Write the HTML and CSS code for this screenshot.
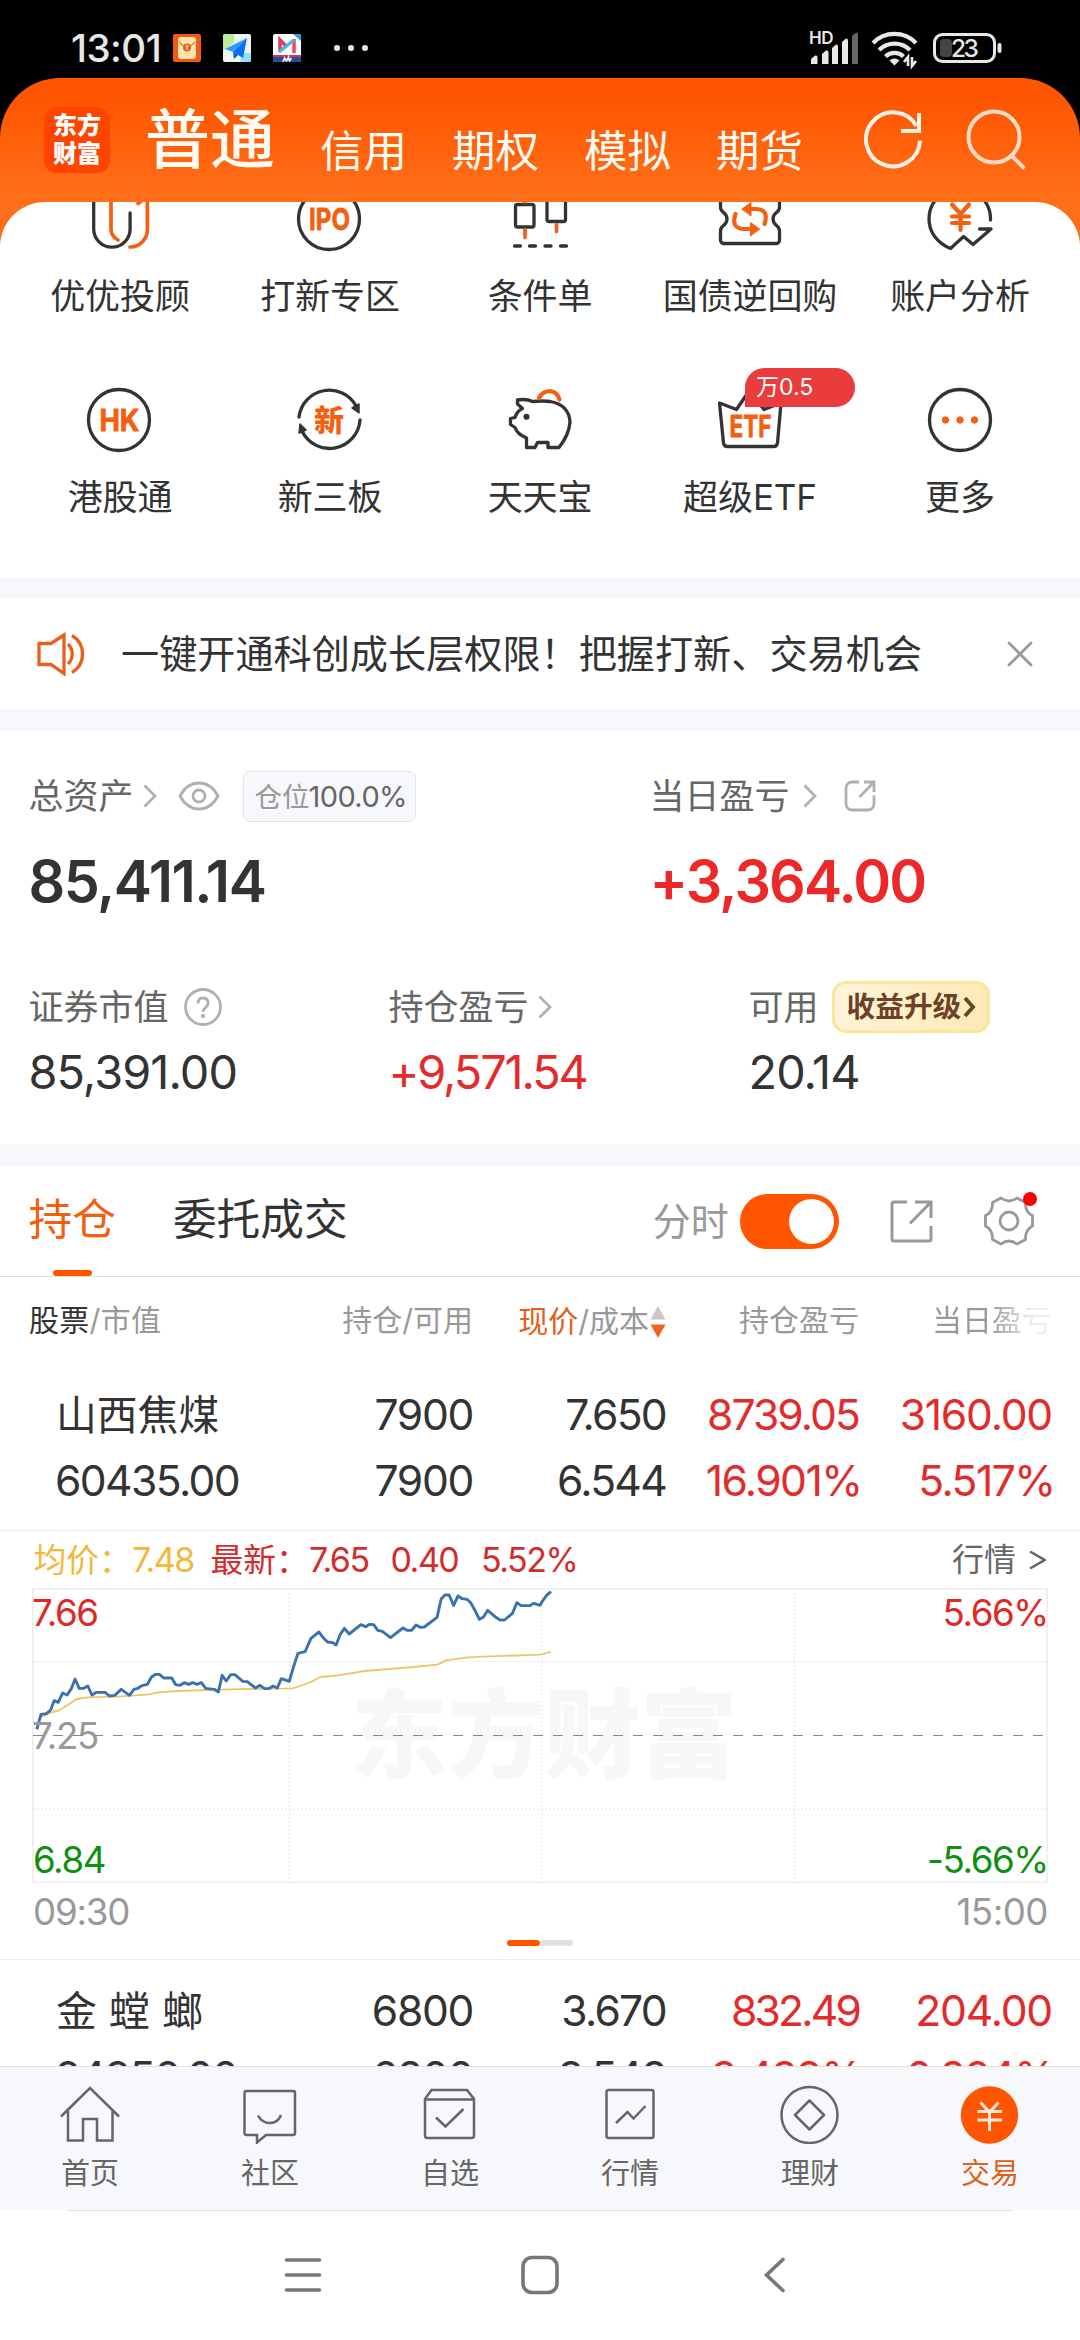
FILE: index.html
```html
<!DOCTYPE html>
<html lang="zh-CN">
<head>
<meta charset="utf-8">
<title>东方财富</title>
<link rel="stylesheet" href="styles.css">
</head>
<body>
<div class="screen">

<div class="status">
  <span class="clock">13:01</span>
  <svg class="app-ico" viewBox="0 0 28 28"><rect width="28" height="28" rx="2" fill="#f25a12"/><rect x="5" y="3" width="18" height="22" rx="3" fill="#ffe3ae"/><path d="M6 8l5 4.500h6l5-4.500" fill="none" stroke="#e8792e" stroke-width="1.200"/><circle cx="14" cy="13.500" r="4" fill="#e0601c"/><path d="M12.300 12h3.400M14 12v4" stroke="#ffe3ae" stroke-width="1.200"/></svg>
  <svg class="app-ico" viewBox="0 0 28 28"><rect width="28" height="28" rx="2" fill="#eef6f4"/><path d="M0 2a2 2 0 0 1 2-2h9v9L0 17z" fill="#bdeb9b"/><path d="M20 19h8v7a2 2 0 0 1-2 2h-9z" fill="#8be0fb"/><path d="M24 4L2 15l8 3z" fill="#2b9bff"/><path d="M24 4L10 18l10 6z" fill="#0a6cf0"/><path d="M10 18l1 7 4-4z" fill="#0857c8"/></svg>
  <svg class="app-ico" viewBox="0 0 28 28"><rect width="28" height="28" rx="2" fill="#fff"/><path d="M20 0h6a2 2 0 0 1 2 2v5z" fill="#2b9fd8"/><path d="M7 18V6l6 6" fill="none" stroke="#e23a5a" stroke-width="3.500"/><path d="M21 5v14" stroke="#e8455f" stroke-width="3.500"/><path d="M6 18L21 6" stroke="#4cb6dd" stroke-width="3.500"/><path d="M0 22h28" stroke="#d8344b" stroke-width="2"/><path d="M0 23h28v3a2 2 0 0 1-2 2H2a2 2 0 0 1-2-2z" fill="#2c4aa0"/><path d="M10 28l1.500-4 2 3 2-4 1 4 2-3" fill="none" stroke="#fff" stroke-width="1.500"/></svg>
  <svg class="more-ico" viewBox="0 0 36 8" fill="#e8e8e8"><circle cx="4" cy="4" r="3"/><circle cx="18" cy="4" r="3"/><circle cx="32" cy="4" r="3"/></svg>
  <div class="status-right">
    <svg width="192" height="36" viewBox="0 0 192 36">
      <text x="0" y="14" class="hd">HD</text>
      <g fill="#e8e8e8"><path d="M2 34v-5l4-3.500a2 2 0 0 1 2.500 2V34z"/><path d="M13 34V24l4-3.500a2 2 0 0 1 2.500 2V34z"/><path d="M23 34V18l4-3.500a2 2 0 0 1 2 2V34z"/><path d="M33 34V12l4-3.500a2 2 0 0 1 2 2V34z"/></g>
      <path d="M43 34V6l4-3.500a2 2 0 0 1 2 2V34z" fill="#666"/>
      <g fill="none" stroke="#e8e8e8" stroke-width="4.200"><path d="M64 13a30 30 0 0 1 43 0"/><path d="M70 20a22 22 0 0 1 31 0"/><path d="M76.500 26.500a13 13 0 0 1 18 0"/></g>
      <path d="M80.500 30.500a7 7 0 0 1 10 0l-5 5z" fill="#e8e8e8"/>
      <path d="M99 36v-9l-4 5M103 27v9l4-5" fill="none" stroke="#e8e8e8" stroke-width="2.600"/>
      <rect x="125.500" y="4.500" width="60" height="27" rx="8" fill="none" stroke="#e8e8e8" stroke-width="3"/>
      <rect x="131" y="9" width="12" height="18" rx="4" fill="#444"/>
      <rect x="188.500" y="13" width="4" height="10" rx="2" fill="#e8e8e8"/>
      <text x="142" y="27" class="batt">23</text>
    </svg>
  </div>
</div>

<div class="app">
  <header class="header">
    <div class="logo">东方<br>财富</div>
    <nav class="accounts">
      <span class="acc acc-on">普通</span>
      <span class="acc">信用</span>
      <span class="acc">期权</span>
      <span class="acc">模拟</span>
      <span class="acc">期货</span>
    </nav>
    <svg class="refresh" viewBox="0 0 60 60" fill="none" stroke="#fff3e8" stroke-width="4"><path d="M57 30.500A27 27 0 1 1 53.500 16"/><path d="M56 3v18H38"/></svg>
    <svg class="search" viewBox="0 0 62 62" fill="none" stroke="#ffdcc4" stroke-width="4"><circle cx="28" cy="29" r="25.500"/><path d="M45 47l13.500 13.500"/></svg>
  </header>

  <main class="content">
    <section class="functions">
      <a class="fn"><svg viewBox="0 0 64 64" class="line"><path d="M5.700 0V42a18.200 18.200 0 0 0 36.400 0V26"/><path class="o" d="M23 0V42q0 7 7 11M59.400 0V42A17.500 17.500 0 0 1 42 60M50 16.500l8-6"/></svg><span>优优投顾</span></a>
      <a class="fn"><svg viewBox="0 0 64 64" class="line"><circle cx="31" cy="32" r="30.500"/><text x="11" y="43" textLength="41" lengthAdjust="spacingAndGlyphs">IPO</text></svg><span>打新专区</span></a>
      <a class="fn"><svg viewBox="0 0 64 64" class="line"><rect x="7.500" y="17.500" width="18.500" height="22.500" rx="2"/><rect x="39" y="6" width="18.500" height="28.500" rx="2"/><path d="M6.500 59h6M21.500 59h6M37 59h6M52.500 59h6"/><path class="o" d="M17 42.500v8M17 10v5M48.500 37.500v7"/></svg><span>条件单</span></a>
      <a class="fn"><svg viewBox="0 0 64 64" class="line"><path d="M2.500 0V20q0 3 2.500 5q4 3 4 7t-4 7q-2.500 2-2.500 5V53a3.500 3.500 0 0 0 3.500 3.500H58a3.500 3.500 0 0 0 3.500-3.500V44q0-3-2.500-5q-4-3-4-7t4-7q2.500-2 2.500-5V0"/><path class="o thick" d="M46.500 37q5-15-9-15H30M17.500 27q-5 15 9 15H34"/><path class="of" d="M24 22l9-6.500v13zM41.500 42l-9-6.500v13z"/></svg><span>国债逆回购</span></a>
      <a class="fn"><svg viewBox="0 0 64 64" class="line"><path d="M62.500 33A31 31 0 0 0 32 1A31 31 0 0 0 1 32C1 45 9 56 22.500 61.500L35.600 49.500L45 57.600L63 42H51.500"/><path class="o thick" d="M24 17.500l8.500 9.500 8.500-9.500M32.500 27V43M24 29.500H41M24 36H41"/></svg><span>账户分析</span></a>
      <a class="fn"><svg viewBox="0 0 64 64" class="line"><circle cx="31" cy="32" r="30.500"/><text x="11.500" y="43" textLength="40" lengthAdjust="spacingAndGlyphs">HK</text></svg><span>港股通</span></a>
      <a class="fn"><svg viewBox="0 0 64 64" class="line"><path d="M1 29A30.500 30.500 0 0 1 58 18M62 32A30.500 30.500 0 0 1 4 43"/><path class="df" d="M54 20l7-4v9zM8 42l-7 3 1-9z"/><text x="16" y="43" class="cn">新</text></svg><span>新三板</span></a>
      <a class="fn"><svg viewBox="0 0 64 64" class="line"><path d="M9.500 12q9-1.500 15 1.500q10-1 18 0Q61 17 62 34Q61 47 51 59.500H40V54.500H29.500L27 59.500H18.500V50Q9 46 7 39.500L2.500 36.500V30.500L7 29.500Q9 23 14.500 20.500L9.500 16z"/><circle class="df" cx="18.500" cy="28.700" r="2.300" /><path class="o thick" d="M31 10Q34 3.500 42 3Q49.500 4 51.500 11.500"/></svg><span>天天宝</span></a>
      <a class="fn"><svg viewBox="0 0 64 64" class="line"><path d="M1.500 15l17 6.500L31 3l15 18.500L63 15L59.500 55a4 4 0 0 1-4 3.500H9.500a4 4 0 0 1-4-3.500z"/><text x="11.500" y="49" textLength="42" lengthAdjust="spacingAndGlyphs">ETF</text></svg><span>超级ETF</span><em class="tag">万0.5</em></a>
      <a class="fn"><svg viewBox="0 0 64 64" class="line"><circle cx="32" cy="32" r="30.500"/><g class="of"><circle cx="17.500" cy="32" r="3.200"/><circle cx="32" cy="32" r="3.200"/><circle cx="46.500" cy="32" r="3.200"/></g></svg><span>更多</span></a>
    </section>

    <section class="notice">
      <svg class="horn" viewBox="0 0 48 44" fill="none" stroke="#e8601c" stroke-width="3.300"><path d="M2 11.500h12L27 3v38.500L14 32.500H2z"/><path d="M31 12a14 14 0 0 1 0 20M35 3.500a21.500 21.500 0 0 1 0 37"/></svg>
      <p>一键开通科创成长层权限！把握打新、交易机会</p>
      <svg class="close" viewBox="0 0 26 26" stroke="#999" stroke-width="2.800" stroke-linecap="round"><path d="M2 2l22 22M24 2L2 24"/></svg>
    </section>

    <section class="assets">
      <div class="major">
        <div>
          <div class="lab">总资产
            <svg class="chev" viewBox="0 0 14 24"><path d="M1.500 1.500L12 12 1.500 22.500"/></svg>
            <svg class="eye" viewBox="0 0 42 30"><path d="M2 15Q9 2 21 2T40 15Q33 28 21 28T2 15z"/><circle cx="21" cy="15" r="6"/></svg>
            <span class="ratio">仓位<b>100.0%</b></span>
          </div>
          <div class="big">85,411.14</div>
        </div>
        <div>
          <div class="lab">当日盈亏
            <svg class="chev chev-far" viewBox="0 0 14 24"><path d="M1.500 1.500L12 12 1.500 22.500"/></svg>
            <svg class="share" viewBox="0 0 32 32"><path d="M15 2H8a6 6 0 0 0-6 6v16a6 6 0 0 0 6 6h16a6 6 0 0 0 6-6v-8.500M15.500 17L29 3M20 2h10v10"/></svg>
          </div>
          <div class="big red pl">+3,364.00</div>
        </div>
      </div>
      <div class="minor">
        <div>
          <div class="lab">证券市值
            <svg class="help" viewBox="0 0 38 38"><circle cx="19" cy="19" r="17.500"/><path d="M14 15.500q0-5.500 5-5.500t5 5q0 3-3 5-2 1.500-2 4"/><circle cx="19" cy="28" r=".8"/></svg>
          </div>
          <div class="mid">85,391.00</div>
        </div>
        <div>
          <div class="lab">持仓盈亏
            <svg class="chev chev-near" viewBox="0 0 14 24"><path d="M1.500 1.500L12 12 1.500 22.500"/></svg>
          </div>
          <div class="mid red tight">+9,571.54</div>
        </div>
        <div>
          <div class="lab">可用
            <span class="upgrade">收益升级<svg viewBox="0 0 13 22"><path d="M2 2l8 9-8 9" fill="none" stroke="#6b4226" stroke-width="3.800"/></svg></span>
          </div>
          <div class="mid">20.14</div>
        </div>
      </div>
    </section>

    <section class="tabs">
      <span class="tab tab-on">持仓</span>
      <span class="tab">委托成交</span>
      <span class="minute">分时</span>
      <i class="switch"></i>
      <svg class="out" viewBox="0 0 43 43" fill="none" stroke="#999" stroke-width="3"><path d="M17 2H4a2 2 0 0 0-2 2v35a2 2 0 0 0 2 2h35a2 2 0 0 0 2-2V26M20 23.500L40 3M25 2h16v16"/></svg>
      <span class="gear"><svg viewBox="0 0 50 50" fill="none" stroke="#999" stroke-width="2.800" stroke-linejoin="round"><path d="M17 2Q25 8 33 2L41.500 6.500Q41 16 48.500 19.500V30Q41 34 41.500 43.500L33 48Q25 42 17 48L8.500 43.500Q9 34 1.500 30V19.500Q9 16 8.500 6.500z"/><circle cx="25" cy="25" r="9"/></svg><i class="dot"></i></span>
    </section>

    <div class="grid thead">
      <span class="th-name"><b>股票</b>/市值</span>
      <span>持仓/可用</span>
      <span class="sorted"><b>现价</b>/成本<svg viewBox="0 0 16 32"><path d="M8 0l7.500 13.500H.5z" fill="#c8c8c8"/><path d="M.5 18.500h15L8 32z" fill="#f0641e"/></svg></span>
      <span>持仓盈亏</span>
      <span class="fade">当日盈亏</span>
    </div>

    <div class="grid row">
      <span class="name">山西焦煤<br><i class="mv">60435.00</i></span>
      <span class="c1">7900<br>7900</span>
      <span class="c2">7.650<br>6.544</span>
      <span class="c3 red">8739.05<br><i class="rate">16.901%</i></span>
      <span class="c4 red">3160.00<br><i class="rate">5.517%</i></span>
    </div>

    <section class="chart">
      <div class="quote">
        <span class="avg">均价：<i>7.48</i></span>
        <span class="last">最新：<i>7.65</i></span>
        <i class="chg">0.40</i>
        <i class="pct">5.52%</i>
        <span class="link">行情<svg viewBox="0 0 17 20"><path d="M1 1.500L15.500 10 1 18.500" fill="none" stroke="#666" stroke-width="2.600"/></svg></span>
      </div>
      <svg class="plot" viewBox="0 0 1080 295">
        <text class="mark" x="351" y="182">东方财富</text>
        <g class="frame"><rect x="33" y="0.800" width="1014" height="293.500"/></g>
        <path class="dots" d="M33 73.500H1047M33 221H1047M289.500 1V294M542 1V294M794.500 1V294"/>
        <path class="mid-line" d="M33 147.500H1047"/>
        <g transform="translate(0 -58) scale(.34439 .33333)">
          <polyline class="avg-line" points="119,562 133,554 152,546 170,542 200,523 222,507 255,502 350,499 428,494 460,487 515,483 640,479 720,477 850,475 880,465 905,455 930,441 980,436 1060,423 1200,411 1270,404 1295,391 1350,383 1400,380 1568,374 1600,366"/>
          <polyline class="price-line" points="107,598 113,575 119,553 135,551 147,540 157,512 169,517 182,489 195,495 207,476 218,447 230,475 243,475 255,468 267,495 280,487 305,487 318,498 333,496 352,478 376,496 389,478 400,475 412,467 428,463 440,441 452,433 463,433 475,444 499,444 510,464 523,466 535,458 547,463 560,458 572,463 585,458 597,475 622,478 634,486 645,436 657,453 670,434 682,434 705,454 718,455 742,474 755,466 768,476 780,476 793,468 805,474 817,446 840,454 851,415 865,370 886,365 903,325 926,306 940,325 951,336 966,338 976,345 988,313 1000,295 1014,312 1048,284 1062,290 1073,283 1085,284 1097,301 1110,304 1134,323 1170,294 1182,301 1195,301 1208,285 1220,292 1232,291 1269,262 1281,207 1292,195 1304,195 1317,226 1330,198 1342,206 1356,208 1368,220 1380,243 1392,268 1404,261 1416,241 1440,262 1452,270 1465,270 1488,250 1501,218 1513,227 1538,227 1550,220 1568,226 1574,215 1588,195 1600,185"/>
        </g>
        <g class="axis">
          <text x="32" y="37.500" fill="#e02828">7.66</text>
          <text x="32" y="161" fill="#999">7.25</text>
          <text x="33" y="284.500" fill="#109010">6.84</text>
          <text x="1048" y="37.500" fill="#e02828" text-anchor="end">5.66%</text>
          <text x="1048" y="284.500" fill="#109010" text-anchor="end">-5.66%</text>
        </g>
      </svg>
      <div class="times"><span>09:30</span><span class="t2">15:00</span></div>
      <div class="pager"><i></i><i></i></div>
    </section>

    <div class="grid row">
      <span class="name wide">金螳螂<br><i class="mv">24956.00</i></span>
      <span class="c1">6800<br>6800</span>
      <span class="c2">3.670<br>3.548</span>
      <span class="c3 red"><i class="snug">832.49</i><br><i class="rate">3.439%</i></span>
      <span class="c4 red">204.00<br><i class="rate">0.824%</i></span>
    </div>
  </main>

  <nav class="bottom">
    <a><svg viewBox="0 0 60 60"><path d="M1 32.500L30 4l29 28.500M8 27v29.500H23V35H37v21.500H52.500V27"/></svg><span>首页</span></a>
    <a><svg viewBox="0 0 60 60"><path d="M6.500 7h46.500a2 2 0 0 1 2 2v40a2 2 0 0 1-2 2H26l-9 7.500V51H6.500a2 2 0 0 1-2-2V9a2 2 0 0 1 2-2zM18 31.500Q22 39 30 39T41 31"/></svg><span>社区</span></a>
    <a><svg viewBox="0 0 60 60"><path d="M5 15L11.500 6H47l7 9V51.500a2.500 2.500 0 0 1-2.500 2.500H7.500a2.500 2.500 0 0 1-2.500-2.500zM5 15.500H54M16 33.500l9.500 9L43.500 25"/></svg><span>自选</span></a>
    <a><svg viewBox="0 0 60 60"><rect x="6.500" y="6" width="47" height="48" rx="2"/><path d="M16 39l11.500-11 6 6.500L45.500 22"/></svg><span>行情</span></a>
    <a><svg viewBox="0 0 60 60"><circle cx="29.500" cy="31" r="28"/><path d="M29.500 16.500L44 31 29.500 45.500 15 31z" stroke-linejoin="round"/></svg><span>理财</span></a>
    <a class="on"><svg viewBox="0 0 60 60"><circle cx="29.500" cy="31" r="28.700" fill="#ff5500" stroke="none"/><path d="M20.500 18.500l9 9.500 9-9.500M29.500 28V47M17.500 27.500H42M17.500 36H42" stroke="#ffe9dc" stroke-width="3"/></svg><span>交易</span></a>
  </nav>
</div>

<div class="sysnav">
  <svg viewBox="0 0 38 40"><path d="M2.500 5h33M2.500 20h33M2.500 35h33" stroke-linecap="round"/></svg>
  <svg viewBox="0 0 38 40"><rect x="2" y="2.500" width="34" height="35" rx="9"/></svg>
  <svg viewBox="0 0 38 40"><path d="M25 4.500L8.500 20 25 35.500" stroke-linecap="round"/></svg>
</div>
</div>
</body>
</html>
```
FILE: styles.css
```css
* { box-sizing: border-box; margin: 0; padding: 0; }
body { background: #000; }
i, em { font-style: normal; }
svg { display: block; flex: none; }

.screen {
  width: 1080px;
  height: 2340px;
  overflow: hidden;
  background: #fff;
  color: #333;
  font-family: Inter, "Noto Sans CJK SC", sans-serif;
}

/* status bar */
.status {
  display: flex;
  align-items: center;
  height: 148px;
  margin-bottom: -70px;
  padding: 18px 85px 70px 71px;
  background: #000;
}
.clock {
  width: 102px;
  color: #e8e8e8;
  font-size: 38.500px;
  font-weight: 500;
  letter-spacing: -0.500px;
  line-height: 40px;
}
.app-ico { width: 28px; height: 28px; margin-right: 22px; }
.more-ico { width: 36px; height: 8px; margin-left: 10px; }
.status-right { margin-left: auto; width: 192px; margin-right: -6px; }
.status-right svg { overflow: visible; }
.hd { fill: #e8e8e8; font-size: 17px; font-weight: 600; letter-spacing: -0.500px; }
.batt { fill: #e8e8e8; font-size: 24.500px; font-weight: 500; letter-spacing: -2.500px; }

/* header */
.app {
  position: relative;
  border-radius: 60px 60px 0 0;
  background: linear-gradient(#ff5500 0, #ff5500 20px, #ff6f19 118px, #ff6f19 100%);
  overflow: hidden;
}
.header { display: flex; align-items: flex-start; height: 124px; padding-left: 44px; }
.logo {
  width: 66px;
  height: 66px;
  margin-top: 29px;
  padding-top: 5px;
  border-radius: 13px;
  background: #ff4400;
  color: #fff;
  text-align: center;
  font-size: 24px;
  font-weight: 900;
  line-height: 28px;
}
.accounts { display: flex; gap: 45px; margin-left: 35px; }
.acc { margin-top: 51px; color: #fffaf2; font-size: 43.500px; line-height: 44px; }
.acc-on { margin-top: 30px; font-size: 65px; line-height: 64px; font-weight: 500; }
.refresh { width: 60px; height: 60px; margin: 32px 0 0 60px; }
.search { width: 62px; height: 62px; margin: 30px 0 0 43px; }

.content {
  height: 1864px;
  overflow: hidden;
  border-radius: 45px 45px 0 0;
  background: #fff;
}

/* function grid */
.functions {
  display: grid;
  grid-template-columns: repeat(5, 210px);
  row-gap: 74px;
  height: 390px;
  margin-top: -15px;
  padding: 0 15px;
  align-content: start;
}
.fn { position: relative; display: flex; flex-direction: column; align-items: center; }
.fn > svg { width: 64px; height: 64px; overflow: visible; }
.fn > span { margin-top: 27px; font-size: 35px; line-height: 36px; white-space: nowrap; letter-spacing: -0.100px; }
.line { fill: none; stroke: #333; stroke-width: 3.300; stroke-linecap: round; stroke-linejoin: round; }
.line .o { stroke: #f55f10; stroke-width: 3.700; }
.line .thick { stroke-width: 4.200; }
.line .of { fill: #f55f10; stroke: #f55f10; stroke-width: 1; }
.line .df { fill: #333; stroke-width: 1.500; }
.line text { fill: #f55f10; stroke: #f55f10; stroke-width: .8; font-size: 30px; font-weight: 700; }
.line .cn { font-size: 30px; font-weight: 900; stroke: none; }
.tag {
  position: absolute;
  left: 100px;
  top: -20px;
  width: 110px;
  height: 39px;
  padding-left: 11px;
  border-radius: 20px 20px 20px 0;
  background: #ea3c3c;
  color: #fff;
  font-size: 23px;
  line-height: 39px;
}

/* notice */
.notice {
  display: flex;
  align-items: center;
  height: 154px;
  padding: 0 47px 0 37px;
  border: solid #f7f8fb;
  border-width: 22px 0;
}
.horn { width: 48px; height: 44px; }
.notice p { margin-left: 36px; font-size: 38.150px; line-height: 44px; white-space: nowrap; }
.close { width: 26px; height: 26px; margin-left: auto; }

/* assets */
.assets { height: 413px; padding: 40px 0 0 28.500px; }
.major { display: grid; grid-template-columns: 621px 1fr; }
.minor { display: grid; grid-template-columns: repeat(3, 360px); margin-top: 70px; }
.lab { display: flex; align-items: center; height: 50px; color: #666; font-size: 35px; line-height: 50px; white-space: nowrap; }
.minor .lab { height: 52px; }
.lab svg { fill: none; stroke: #b0b0b0; stroke-width: 2.800; }
.chev { width: 14px; height: 24px; margin-left: 9px; }
.chev-far { margin-left: 13px; }
.chev-near { margin-left: 9px; }
.eye { width: 42px; height: 30px; margin-left: 21px; }
.share { width: 32px; height: 32px; margin-left: 27px; }
.help { width: 38px; height: 38px; margin-left: 15px; }
.ratio {
  height: 51px;
  width: 173px;
  margin-left: 23px;
  padding-left: 11px;
  border: 1px solid #e4e4e6;
  border-radius: 7px;
  background: #f7f8fb;
  color: #999;
  font-size: 27.500px;
  line-height: 50px;
}
.ratio b { color: #666; font-size: 29px; font-weight: 400; letter-spacing: -0.600px; margin-left: -1px; }
.big { margin-top: 30px; font-size: 57.400px; font-weight: 600; line-height: 60px; letter-spacing: -1.500px; }
.pl { letter-spacing: -1.830px; }
.mid { margin-top: 14px; font-size: 46.800px; line-height: 50px; letter-spacing: -0.900px; }
.tight { letter-spacing: -2.100px; }
.red { color: #e22b2b; }
.big.red { color: #ec2828; }
.upgrade {
  display: flex;
  align-items: center;
  width: 158px;
  height: 52px;
  margin-left: 13px;
  padding-left: 12px;
  border: 3px solid #fae79a;
  border-radius: 14px;
  background: linear-gradient(100deg, #fff4dc, #ffe9b4);
  color: #6b4226;
  font-size: 28.700px;
  font-weight: 700;
  line-height: 44px;
}
.lab .upgrade svg { width: 13px; height: 22px; margin-left: 2px; }

/* tabs */
.tabs {
  display: flex;
  align-items: center;
  height: 133px;
  padding-left: 28.500px;
  border-top: 22px solid #f7f8fb;
  border-bottom: 1px solid #dcdcdc;
}
.tab { position: relative; height: 110px; font-size: 43.700px; line-height: 108px; white-space: nowrap; }
.tab-on { margin-right: 57px; color: #f2600f; }
.tab-on::after {
  content: "";
  position: absolute;
  left: 24.500px;
  bottom: 0;
  width: 39px;
  height: 6px;
  border-radius: 3px;
  background: #ff5500;
}
.minute { margin-left: 305px; width: 87px; color: #999; font-size: 38px; line-height: 50px; }
.switch { width: 99px; height: 55px; border-radius: 28px; background: #ff5500; }
.switch::after { content: ""; display: block; width: 45px; height: 45px; margin: 5px 0 0 49px; border-radius: 50%; background: #fff; }
.out { width: 43px; height: 43px; margin-left: 51px; }
.gear { position: relative; margin-left: 51px; }
.gear svg { width: 50px; height: 50px; }
.dot { position: absolute; right: -3px; top: -4px; width: 14px; height: 14px; border-radius: 50%; background: #f00; }

/* holdings table */
.grid {
  display: grid;
  grid-template-columns: 1fr repeat(4, 193px);
  padding: 0 28px;
  text-align: right;
  white-space: nowrap;
}
.grid > :first-child { text-align: left; }
.thead { height: 87px; color: #999; font-size: 30px; line-height: 86px; }
.thead b { color: #333; font-weight: 400; }
.th-name { letter-spacing: 0.300px; padding-left: 1px; }
.thead .sorted { display: flex; justify-content: flex-end; align-items: center; }
.thead .sorted b { color: #e0601c; }
.sorted svg { width: 16px; height: 32px; margin: 2px 0 0 1px; }
.fade { background: linear-gradient(90deg, #999 68%, #eee 90%); -webkit-background-clip: text; background-clip: text; color: transparent; }
.row {
  height: 167px;
  padding-top: 17.500px;
  border-bottom: 1px solid #ececec;
  font-size: 42.600px;
  line-height: 66px;
}
.row .name { padding-left: 28px; font-size: 40.800px; }
.row .wide { letter-spacing: 12.300px; }
.row .mv { font-size: 42.600px; letter-spacing: -1.580px; margin-left: -1px; }
.c1 { letter-spacing: -1.340px; }
.c2 { letter-spacing: -1.700px; }
.c3 { letter-spacing: -1.900px; }
.c4 { letter-spacing: -1.200px; }
.rate { margin-right: -2.500px; letter-spacing: -1.550px; }
.snug { letter-spacing: -2.800px; }

/* intraday chart */
.chart { height: 429px; border-bottom: 1px solid #ececec; }
.quote { display: flex; align-items: center; height: 57px; padding: 0 34px 0 33.500px; font-size: 32.800px; line-height: 56px; color: #d42c2c; }
.quote i { font-size: 34px; letter-spacing: -1.500px; }
.avg { width: 177px; color: #f2b83c; }
.last { width: 180px; white-space: nowrap; }
.chg { width: 90.500px; }
.link { display: flex; align-items: center; gap: 13px; margin-left: auto; color: #666; font-size: 32px; }
.link svg { width: 17px; height: 20px; }
.plot { width: 1080px; height: 295px; }
.frame rect { fill: none; stroke: #efefef; stroke-width: 2; }
.dots { fill: none; stroke: #e6e6e6; stroke-width: 1; stroke-dasharray: 2 2; }
.mid-line { stroke: #888; stroke-width: 1; stroke-dasharray: 10 10; }
.avg-line, .price-line { fill: none; stroke-linejoin: round; vector-effect: non-scaling-stroke; }
.avg-line { stroke: #eec566; stroke-width: 1.800; }
.price-line { stroke: #3a72b0; stroke-width: 2.900; }
.mark { fill: #f7f7f7; font-size: 96.500px; font-weight: 900; }
.axis { font-size: 36.700px; letter-spacing: -1.400px; }
.times { display: flex; justify-content: space-between; align-items: center; height: 57px; padding: 0 32px 0 33px; color: #999; font-size: 36.700px; line-height: 56px; letter-spacing: -1.200px; }
.t2 { letter-spacing: -0.500px; }
.pager { display: flex; justify-content: center; }
.pager i { width: 33px; height: 6px; border-radius: 3px; background: #e2e2e2; }
.pager i:first-child { background: #ff5500; }

/* bottom navigation */
.bottom { display: flex; height: 144px; border-top: 1px solid #e0e0e0; background: #f7f8fb; }
.bottom a { display: flex; flex-direction: column; align-items: center; width: 180px; padding-top: 17px; color: #666; font-size: 29px; line-height: 30px; }
.bottom svg { width: 60px; height: 60px; margin-bottom: 15px; fill: none; stroke: #666; stroke-width: 2.500; }
.bottom .on { color: #e0601c; }

/* system navigation */
.sysnav { display: flex; justify-content: space-between; height: 130px; margin: 0 69px; padding: 44px 215px 0; border-top: 1px solid #e2e2e2; }
.sysnav svg { width: 38px; height: 40px; fill: none; stroke: #777; stroke-width: 3.600; }
```
